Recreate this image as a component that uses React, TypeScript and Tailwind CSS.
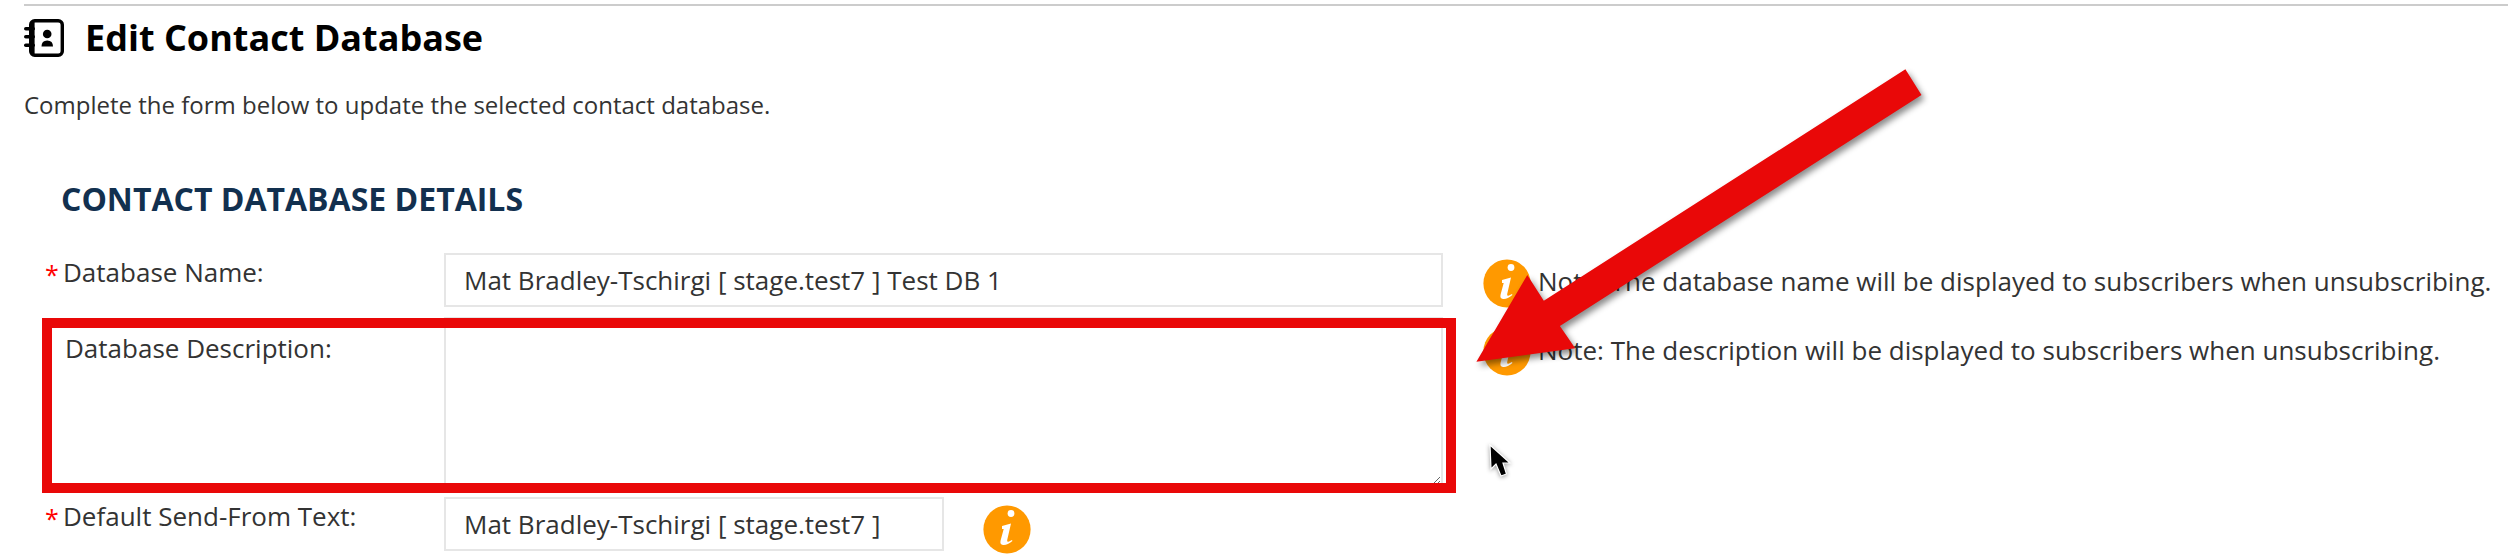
import React from "react";

function InfoIcon() {
  return (
    <svg width="48" height="49" viewBox="0 0 48 49" className="shrink-0">
      <ellipse cx="24" cy="24.5" rx="23.6" ry="24" fill="#ff9900" />
      <circle cx="28" cy="8.5" r="3.4" fill="#fff" />
      <path d="M19 21 L28 18.5 L24.2 35 Q23.7 37.5 26 36.5 L29 35 L29.4 36 Q24 40.5 20 40 Q16.6 39.6 17.6 35.5 L20.7 24 L19 24 Z" fill="#fff" />
    </svg>
  );
}

function BookIcon() {
  return (
    <svg width="40" height="38" viewBox="0 0 40 38" className="shrink-0">
      <rect x="6.7" y="1.7" width="31.6" height="34.6" rx="4" fill="none" stroke="#000" strokeWidth="3.4" />
      <rect x="8" y="2" width="2.6" height="34" fill="#000" />
      <rect x="0" y="8" width="11" height="3.6" rx="1.8" fill="#000" />
      <rect x="0" y="16" width="11" height="3.6" rx="1.8" fill="#000" />
      <rect x="0" y="24.4" width="11" height="3.6" rx="1.8" fill="#000" />
      <circle cx="23.2" cy="15" r="4.3" fill="#000" />
      <path d="M17.5 27.5 Q17.5 21.5 23.2 21.5 Q29 21.5 29 27.5 Z" fill="#000" />
    </svg>
  );
}

function Req() {
  return <span className="text-[#ff0000] w-[18px] mt-[2px] text-[25px]">*</span>;
}

export default function App() {
  const inputClass =
    "block h-[54px] border-2 border-[#e6e6e6] bg-white pl-[18px] text-[26px] text-[#333] outline-none";
  return (
    <div className="relative w-[2508px] h-[556px] overflow-hidden bg-white text-[#333] font-['Open_Sans',sans-serif]">
      <div className="pt-[4px]">
        <div className="ml-[24px] h-[2px] bg-[#cccccc]" />
      </div>
      <div className="ml-[24px] mt-[13px] flex items-center h-[38px] gap-[21px]">
        <BookIcon />
        <h1 className="text-[36px] leading-[38px] font-bold text-black">Edit Contact Database</h1>
      </div>
      <p className="ml-[24px] mt-[31px] text-[24px] leading-[34px]">Complete the form below to update the selected contact database.</p>
      <h2 className="ml-[61px] mt-[57px] text-[32px] leading-[40px] font-bold text-[#12304f]">CONTACT DATABASE DETAILS</h2>

      <div className="ml-[45px] mt-[34px] flex flex-col gap-[10px]">
        <div className="flex h-[54px]">
          <label className="w-[399px] flex text-[26px] leading-[34px] pt-[2px]"><Req />Database Name:</label>
          <input readOnly value="Mat Bradley-Tschirgi [ stage.test7 ] Test DB 1" className={`${inputClass} w-[999px]`} />
          <div className="ml-[40px] mt-[6px] flex items-start">
            <InfoIcon />
            <span className="ml-[7px] mt-[5px] text-[26px] leading-[34px] whitespace-nowrap">Note: The database name will be displayed to subscribers when unsubscribing.</span>
          </div>
        </div>
        <div className="flex h-[170px]">
          <label className="w-[399px] pl-[20px] pt-[14px] text-[26px] leading-[34px]">Database Description:</label>
          <textarea readOnly className="block h-[170px] w-[999px] border-2 border-[#e6e6e6] bg-white outline-none" />
          <div className="ml-[40px] mt-[10px] flex items-start">
            <InfoIcon />
            <span className="ml-[7px] mt-[6px] text-[26px] leading-[34px] whitespace-nowrap">Note: The description will be displayed to subscribers when unsubscribing.</span>
          </div>
        </div>
        <div className="flex h-[54px]">
          <label className="w-[399px] flex text-[26px] leading-[34px] pt-[2px]"><Req />Default Send-From Text:</label>
          <input readOnly value="Mat Bradley-Tschirgi [ stage.test7 ]" className={`${inputClass} w-[500px]`} />
          <div className="ml-[39px] mt-[8px]"><InfoIcon /></div>
        </div>
      </div>

      {/* annotation: red rectangle */}
      <div className="absolute left-[42px] top-[318px] w-[1414px] h-[175px] border-[10px] border-[#e90808] pointer-events-none" />

      {/* annotation: arrow */}
      <svg className="absolute left-0 top-0 pointer-events-none drop-shadow-[3px_4px_3px_rgba(0,0,0,0.45)]" width="2508" height="556" viewBox="0 0 2508 556">
        <polygon
          points="1905.4,69.3 1921.5,95 1559.9,326 1575.2,348.3 1476.4,361.7 1527.3,275 1543.8,300.7"
          fill="#e90808"
        />
      </svg>

      {/* annotation: mouse pointer */}
      <svg className="absolute left-[1488px] top-[444px] drop-shadow-[0_1px_2px_rgba(0,0,0,0.4)]" width="26" height="36" viewBox="0 0 26 36">
        <path d="M2 1 L3 25 L8 20 L13 32 L18.5 30 L15 19 L22 19 Z" fill="#000" stroke="#fff" strokeWidth="1.2" />
      </svg>
    </div>
  );
}
